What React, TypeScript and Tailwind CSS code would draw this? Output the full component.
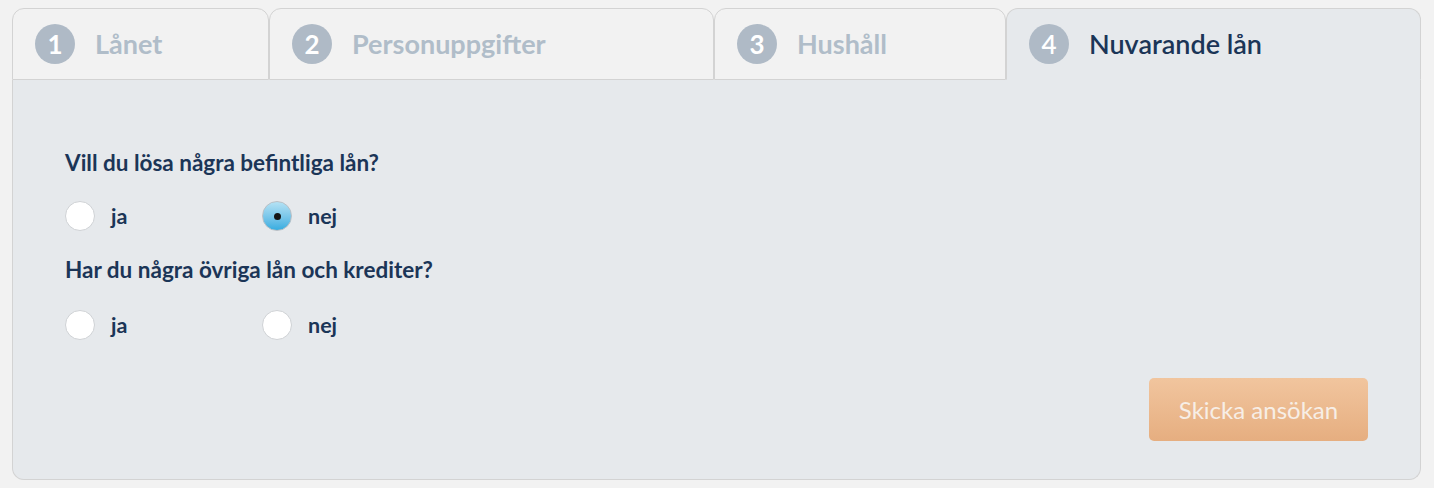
import { useState } from 'react'

const steps = [
  { n: 1, label: 'Lånet', width: 'w-[257px]' },
  { n: 2, label: 'Personuppgifter', width: 'w-[445px]' },
  { n: 3, label: 'Hushåll', width: 'w-[292px]' },
  { n: 4, label: 'Nuvarande lån', width: 'w-[415px]' },
]

function Radio({ checked, label, onClick }: { checked: boolean; label: string; onClick: () => void }) {
  return (
    <button type="button" onClick={onClick} className="flex items-center gap-4 w-[197px] h-[30px]">
      {checked ? (
        <span className="w-[30px] h-[30px] rounded-full border border-[#b9c0c6] bg-gradient-to-b from-[#b4e2f4] to-[#34ade0] flex items-center justify-center">
          <span className="w-[7px] h-[7px] rounded-full bg-[#151515]" />
        </span>
      ) : (
        <span className="w-[30px] h-[30px] rounded-full border border-[#cfd2d5] bg-white" />
      )}
      <span className="text-[21.5px] leading-[30px] font-bold text-[#1b3557]">{label}</span>
    </button>
  )
}

function Question({ title, value, onChange, gap }: { title: string; value: string; onChange: (v: string) => void; gap: string }) {
  return (
    <div>
      <div className="text-[22.5px] font-bold text-[#1b3557] leading-[30px]">{title}</div>
      <div className={'flex ' + gap}>
        <Radio label="ja" checked={value === 'ja'} onClick={() => onChange('ja')} />
        <Radio label="nej" checked={value === 'nej'} onClick={() => onChange('nej')} />
      </div>
    </div>
  )
}

export default function App() {
  const [q1, setQ1] = useState('nej')
  const [q2, setQ2] = useState('')
  const active = 4

  return (
    <div className="min-h-screen bg-[#f2f2f2] pt-2 px-3" style={{ fontFamily: 'Lato, "Open Sans", sans-serif' }}>
      <div className="w-[1409px]">
        {/* Steps */}
        <div className="flex">
          {steps.map((s) => {
            const isActive = s.n === active
            return (
              <div
                key={s.n}
                className={
                  'h-[72px] flex items-center pl-[22px] gap-[20px] rounded-t-xl border border-[#d3d3d3] ' +
                  s.width +
                  (isActive ? ' bg-[#e6e9ec] border-b-transparent' : ' bg-[#f2f2f2]')
                }
              >
                <span
                  className={
                    'w-[40px] h-[40px] rounded-full bg-[#afbac6] text-white text-[26px] leading-none flex items-center justify-center ' +
                    (isActive ? 'font-semibold' : 'font-bold')
                  }
                >
                  {s.n}
                </span>
                <span className={'text-[27px] ' + (isActive ? 'font-semibold text-[#1b3557]' : 'font-bold text-[#b0bdc9]')}>
                  {s.label}
                </span>
              </div>
            )
          })}
        </div>

        {/* Panel */}
        <div className="bg-[#e6e9ec] border border-t-0 border-[#d3d3d3] rounded-b-xl px-[52px] pt-[68px] pb-[38px]">
          <Question title="Vill du lösa några befintliga lån?" value={q1} onChange={setQ1} gap="mt-[23px]" />
          <div className="mt-[24px]">
            <Question title="Har du några övriga lån och krediter?" value={q2} onChange={setQ2} gap="mt-[25px]" />
          </div>
          <div className="flex justify-end mt-[38px]">
            <button
              type="button"
              className="w-[219px] h-[63px] rounded-[5px] bg-gradient-to-b from-[#f1c59e] to-[#e6ae80] text-[#f7eee6] text-[24px]"
            >
              Skicka ansökan
            </button>
          </div>
        </div>
      </div>
    </div>
  )
}
